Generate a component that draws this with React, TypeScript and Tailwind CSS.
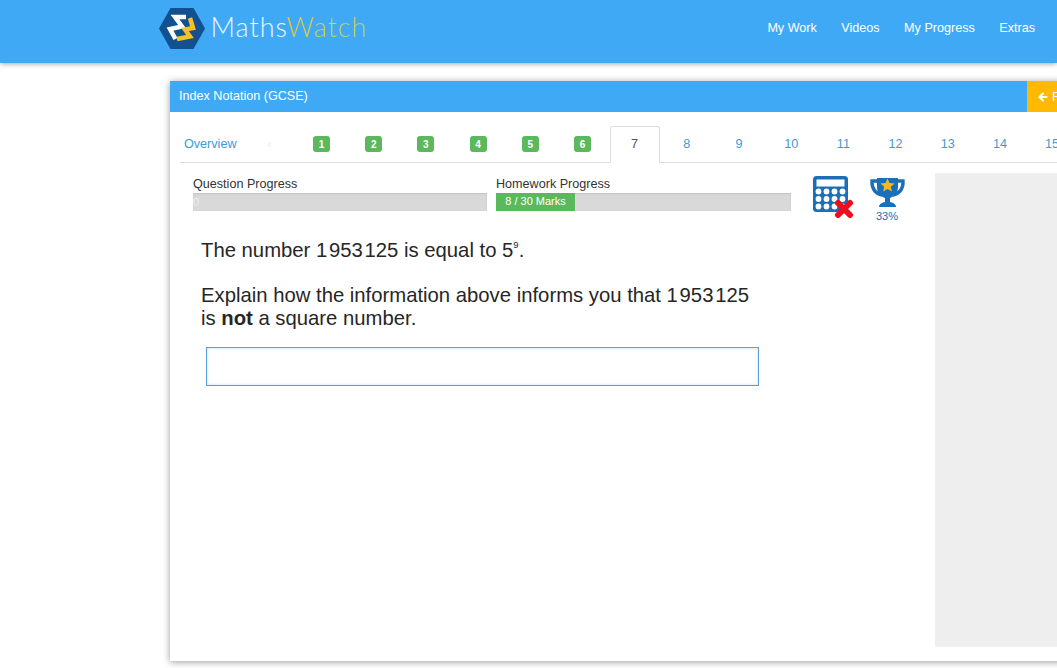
import { ArrowLeft } from "lucide-react";

const doneTabs = ["1", "2", "3", "4", "5", "6"];
const laterTabs = ["8", "9", "10", "11", "12", "13", "14", "15"];
const navLinks = ["My Work", "Videos", "My Progress", "Extras"];

function Logo() {
  return (
    <div className="flex items-center gap-[5.500px]">
      <svg width="46" height="41" viewBox="0 0 46 41">
        <path d="M11.500 0H34.500L46 20.500L34.500 41H11.500L0 20.500Z" fill="#12508f" />
        <path d="M27 9H16L23 18.500L11 21L16.500 31" fill="none" stroke="#fff" strokeWidth="4.500" />
        <path d="M31 10L34 20L26 21.500L31 28.500L18 31" fill="none" stroke="#f5c02a" strokeWidth="4.500" />
      </svg>
      <span className="pb-[3px] font-['Lato',sans-serif] font-light text-[27px] leading-none tracking-[1px] text-[#e6f5ff]">
        Maths
        <span className="bg-gradient-to-r from-[#f0c828] to-[#b4d47c] bg-clip-text text-transparent">Watch</span>
      </span>
    </div>
  );
}

function CalculatorOff() {
  return (
    <svg width="41" height="42" viewBox="0 0 41 42" className="block">
      <rect x="0" y="0" width="35" height="36" rx="3.500" fill="#1a6fb8" />
      <rect x="3.500" y="3.500" width="28" height="7" fill="#fff" />
      {[15.5, 23, 30.5].map((cy) =>
        [5.5, 13.5, 21.5, 29.5].map((cx) => <circle key={`${cx}-${cy}`} cx={cx} cy={cy} r="2.900" fill="#fff" />)
      )}
      <path d="M25 27L37 39M37 27L25 39" stroke="#ee0d1c" strokeWidth="6" strokeLinecap="round" />
    </svg>
  );
}

function Trophy() {
  return (
    <svg width="35" height="31" viewBox="0 0 35 31" className="block">
      <path d="M9 4H2C1.500 12 6 17 12 18" fill="none" stroke="#1a6fb8" strokeWidth="3.400" />
      <path d="M26 4H33C33.500 12 29 17 23 18" fill="none" stroke="#1a6fb8" strokeWidth="3.400" />
      <path d="M7 1H28V10C28 17 23 20 20 21V25H15V21C12 20 7 17 7 10Z" fill="#1a6fb8" />
      <path d="M9 30C9 27 12 25 17.500 25C23 25 26 27 26 30Z" fill="#1a6fb8" />
      <path d="M17.500 1.500L19.500 6L24.500 6.500L20.800 9.800L21.900 14.500L17.500 12L13.100 14.500L14.200 9.800L10.500 6.500L15.500 6Z" fill="#f7b81f" />
    </svg>
  );
}

export default function App() {
  return (
    <div className="h-[668px] w-[1057px] overflow-hidden bg-white font-['Liberation_Sans',Arial,sans-serif] text-[12.6px] text-[#333]">
      <header className="relative z-10 flex h-[63px] items-center justify-between bg-[#3fa9f5] pb-[7px] pl-[159px] pr-[22px] shadow-[0_1px_5px_rgba(0,0,0,0.35)]">
        <Logo />
        <nav className="flex gap-[24.500px] text-white">
          {navLinks.map((l) => (
            <span key={l}>{l}</span>
          ))}
        </nav>
      </header>

      <main className="ml-[170px] mt-[18px] w-[1000px] bg-white shadow-[0_1px_7px_rgba(0,0,0,0.4)]">
        <div className="flex h-[31px] items-center bg-[#3fa9f5] text-white">
          <div className="w-[857px] shrink-0 pl-[9px] pb-[1px]">Index Notation (GCSE)</div>
          <div className="flex h-full w-[100px] items-center gap-[3px] bg-[#ffb900] pl-[10px] pt-[1px]">
            <ArrowLeft size={12} strokeWidth={4} />
            <span>Return</span>
          </div>
        </div>

        <div className="pb-[14px] pl-[10px]">
          <div className="mt-[14px] flex h-[37px] items-stretch border-b border-[#ddd]">
            <div className="flex w-[116.500px] shrink-0 items-center gap-[31px] pl-[4px] text-[#3c9ad9]">
              Overview
              <span className="text-[#eee]">‹</span>
            </div>
            {doneTabs.map((t) => (
              <div key={t} className="mr-[2.200px] flex w-[50px] shrink-0 items-center justify-center">
                <span className="flex h-[16px] w-[17px] items-center justify-center rounded-[3px] bg-[#5cb85c] text-[10px] font-bold text-white">
                  {t}
                </span>
              </div>
            ))}
            <div className="mr-[2.200px] flex h-[37px] w-[50px] shrink-0 items-center justify-center rounded-t-[3px] border border-[#ddd] border-b-white text-[#555]">
              7
            </div>
            {laterTabs.map((t) => (
              <div key={t} className="mr-[2.200px] flex w-[50px] shrink-0 items-center justify-center text-[#3c9ad9]">
                {t}
              </div>
            ))}
          </div>

          <div className="mt-[10px] flex">
            <div className="w-[755px] shrink-0 pl-[13px]">
              <div className="flex h-[49px] pt-[3px]">
                <div className="w-[294px] shrink-0">
                  <div className="h-[17px] leading-[16px]">Question Progress</div>
                  <div className="h-[18px] bg-[#d9d9d9] text-[11px] leading-[18px] text-[#eee] shadow-[inset_0_1px_2px_rgba(0,0,0,0.1)]">0</div>
                </div>
                <div className="ml-[9px] w-[295px] shrink-0">
                  <div className="h-[17px] leading-[16px]">Homework Progress</div>
                  <div className="h-[18px] bg-[#d9d9d9] shadow-[inset_0_1px_2px_rgba(0,0,0,0.1)]">
                    <div className="h-full w-[79px] bg-[#5cb85c] text-center text-[11px] leading-[17px] text-white">8 / 30 Marks</div>
                  </div>
                </div>
                <div className="ml-[22px] shrink-0">
                  <CalculatorOff />
                </div>
                <div className="ml-[15.500px] flex shrink-0 flex-col items-center">
                  <div className="pt-[1px]">
                    <Trophy />
                  </div>
                  <span className="mt-[2px] text-[11px] leading-[13px] text-[#1a6fb8]">33%</span>
                </div>
              </div>

              <div className="mt-[17px] pl-[8px] text-[20.300px] leading-[23px] text-[#262626]">
                <p>
                  The number 1{"\u200a"}953{"\u200a"}125 is equal to 5<sup className="relative top-[-1px] align-super text-[9.500px] leading-none">9</sup>.
                </p>
                <p className="mt-[22px]">
                  Explain how the information above informs you that 1{"\u200a"}953{"\u200a"}125
                  <br />
                  is <b>not</b> a square number.
                </p>
              </div>

              <div className="ml-[13px] mt-[17px] h-[39px] w-[553px] border border-[#5a9fd8] shadow-[inset_0_0_3px_rgba(76,148,207,0.35)]" />
            </div>
            <aside className="h-[474px] flex-1 bg-[#eeeeee]" />
          </div>
        </div>
      </main>
    </div>
  );
}
